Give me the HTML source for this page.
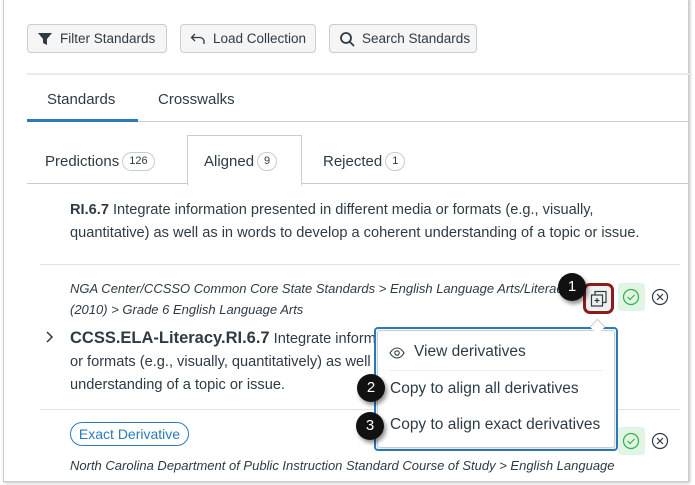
<!DOCTYPE html>
<html><head><style>
*{box-sizing:border-box;margin:0;padding:0}
body{width:695px;height:485px;background:#fff;font-family:"Liberation Sans",sans-serif;color:#2d3b45;position:relative;overflow:hidden}
.frame{position:absolute;left:3px;top:-2px;width:686px;height:484px;border:1px solid #c7cdd1;box-shadow:1px 1px 3px rgba(0,0,0,.25)}
.a{position:absolute;white-space:nowrap}
.btn{position:absolute;top:24px;height:29px;background:#f5f5f5;border:1px solid #c7cdd1;border-radius:4px;font-size:13.5px;line-height:28px;padding-left:32px;color:#2d3b45}
.btn svg{position:absolute;left:9px;top:6px}
.line{position:absolute;height:1px;background:#dfe2e4}
.badge{display:inline-block;border:1px solid #c7cdd1;border-radius:10px;font-size:11px;padding:0 6px;line-height:17px;vertical-align:2px;margin-left:3px}
.t15{font-size:14.6px;line-height:23px}
.it{font-style:italic;font-size:13px;line-height:21px}
.co{position:absolute;width:28px;height:28px;border-radius:50%;background:#111;color:#fff;font-size:15px;text-align:center;line-height:28px;box-shadow:2px 3px 4px rgba(0,0,0,.45)}
.pi{position:absolute;left:390px;font-size:15.5px;color:#2d3b45}
</style></head><body>
<div class="frame"></div>
<div class="btn" style="left:27px;width:140px"><svg width="16" height="16" viewBox="0 0 16 16"><path d="M1 2h14l-5 6v6l-4-2V8z" fill="#2d3b45"/></svg>Filter Standards</div>
<div class="btn" style="left:180px;width:136px"><svg width="16" height="16" viewBox="0 0 16 16"><path d="M5 3L1.5 6.5 5 10M1.5 6.5H10a4 4 0 014 4V13" fill="none" stroke="#2d3b45" stroke-width="1.3"/></svg>Load Collection</div>
<div class="btn" style="left:329px;width:148px"><svg width="16" height="16" viewBox="0 0 16 16"><circle cx="7" cy="7" r="5" fill="none" stroke="#2d3b45" stroke-width="1.8"/><path d="M10.5 10.5L15 15" stroke="#2d3b45" stroke-width="1.8"/></svg>Search Standards</div>
<div class="line" style="left:27px;top:73px;width:662px;background:#e8eaec;height:2px"></div>
<div class="a" style="left:47px;top:91px;font-size:15px">Standards</div>
<div class="a" style="left:158px;top:91px;font-size:15px">Crosswalks</div>
<div class="line" style="left:27px;top:121px;width:662px;background:#c7cdd1"></div>
<div class="a" style="left:27px;top:119px;width:111px;height:3px;background:#2b7abc"></div>
<div class="line" style="left:27px;top:183px;width:662px;background:#c7cdd1"></div>
<div class="a" style="left:187px;top:135px;width:115px;height:50px;border:1px solid #c7cdd1;border-bottom:none;background:#fff"></div>
<div class="a" style="left:45px;top:152px;font-size:15px">Predictions<span class="badge">126</span></div>
<div class="a" style="left:204px;top:152px;font-size:15px">Aligned<span class="badge">9</span></div>
<div class="a" style="left:323px;top:152px;font-size:15px">Rejected<span class="badge">1</span></div>
<div class="a t15" style="left:70px;top:199px"><b>RI.6.7</b> Integrate information presented in different media or formats (e.g., visually,<br>quantitative) as well as in words to develop a coherent understanding of a topic or issue.</div>
<div class="line" style="left:40px;top:264px;width:640px"></div>
<div class="a it" style="left:70px;top:278px">NGA Center/CCSSO Common Core State Standards &gt; English Language Arts/Literacy<br>(2010) &gt; Grade 6 English Language Arts</div>
<svg class="a" style="left:45px;top:331px" width="10" height="12" viewBox="0 0 10 12"><path d="M2 1l5 5-5 5" fill="none" stroke="#2d3b45" stroke-width="1.5"/></svg>
<div class="a t15" style="left:70px;top:327px"><b style="font-size:16.5px">CCSS.ELA-Literacy.RI.6.7</b> Integrate information presented in different media<br>or formats (e.g., visually, quantitatively) as well as in words to develop a coherent<br>understanding of a topic or issue.</div>
<div class="line" style="left:40px;top:409px;width:640px"></div>
<div class="a" style="left:70px;top:422px;width:119px;height:24px;border:1px solid #2b7abc;border-radius:12px;color:#2b7abc;font-size:14px;line-height:22px;text-align:center">Exact Derivative</div>
<div class="a it" style="left:70px;top:455px">North Carolina Department of Public Instruction Standard Course of Study &gt; English Language</div>
<div class="a" style="left:583px;top:283px;width:31px;height:31px;border:3px solid #8b1c1c;border-radius:7px;background:#f0f0f0"></div>
<svg class="a" style="left:590px;top:290px" width="18" height="18" viewBox="0 0 18 18"><rect x="5" y="1.5" width="11" height="11" fill="none" stroke="#2d3b45" stroke-width="1.2"/><rect x="1.5" y="5" width="11" height="11" fill="#f0f0f0" stroke="#2d3b45" stroke-width="1.2"/><path d="M7 8v5M4.5 10.5h5" stroke="#2d3b45" stroke-width="1.2"/></svg>
<div class="a" style="left:618px;top:283px;width:27px;height:28px;background:#e2f5e4;border-radius:3px"></div>
<svg class="a" style="left:622px;top:288px" width="18" height="18" viewBox="0 0 18 18"><circle cx="9" cy="9" r="7.5" fill="none" stroke="#2bb34b" stroke-width="1.2"/><path d="M5.5 9l2.5 2.5 4.5-4.5" fill="none" stroke="#2bb34b" stroke-width="1.2"/></svg>
<svg class="a" style="left:651px;top:288px" width="18" height="18" viewBox="0 0 18 18"><circle cx="9" cy="9" r="7.5" fill="none" stroke="#2d3b45" stroke-width="1.2"/><path d="M6 6l6 6M12 6l-6 6" stroke="#2d3b45" stroke-width="1.2"/></svg>
<div class="a" style="left:618px;top:427px;width:27px;height:28px;background:#e2f5e4;border-radius:3px"></div>
<svg class="a" style="left:622px;top:432px" width="18" height="18" viewBox="0 0 18 18"><circle cx="9" cy="9" r="7.5" fill="none" stroke="#2bb34b" stroke-width="1.2"/><path d="M5.5 9l2.5 2.5 4.5-4.5" fill="none" stroke="#2bb34b" stroke-width="1.2"/></svg>
<svg class="a" style="left:651px;top:432px" width="18" height="18" viewBox="0 0 18 18"><circle cx="9" cy="9" r="7.5" fill="none" stroke="#2d3b45" stroke-width="1.2"/><path d="M6 6l6 6M12 6l-6 6" stroke="#2d3b45" stroke-width="1.2"/></svg>
<div class="a" style="left:374px;top:327px;width:244px;height:124px;border:2px solid #2b7abc;border-radius:4px;background:#fff"></div>
<div class="a" style="left:377px;top:330px;width:238px;height:118px;border:1px solid #c7cdd1;border-radius:3px;box-shadow:0 1px 3px rgba(0,0,0,.15)"></div>
<div class="a" style="left:592px;top:321px;width:11px;height:11px;background:#fff;border-left:1px solid #c7cdd1;border-top:1px solid #c7cdd1;transform:rotate(45deg)"></div>
<svg class="a" style="left:389px;top:347px" width="16" height="12" viewBox="0 0 16 12"><path d="M1 6C3 2.5 5.5 1 8 1s5 1.5 7 5c-2 3.5-4.5 5-7 5S3 9.5 1 6z" fill="none" stroke="#2d3b45" stroke-width="1.1"/><circle cx="8" cy="6" r="2.2" fill="none" stroke="#2d3b45" stroke-width="1.1"/></svg>
<div class="pi" style="left:414px;top:343px">View derivatives</div>
<div class="line" style="left:389px;top:370px;width:214px;background:#eceeef"></div>
<div class="pi" style="top:380px">Copy to align all derivatives</div>
<div class="pi" style="top:416px">Copy to align exact derivatives</div>
<div class="co" style="left:558px;top:273px">1</div>
<div class="co" style="left:357px;top:374px">2</div>
<div class="co" style="left:356px;top:412px">3</div>
</body></html>
